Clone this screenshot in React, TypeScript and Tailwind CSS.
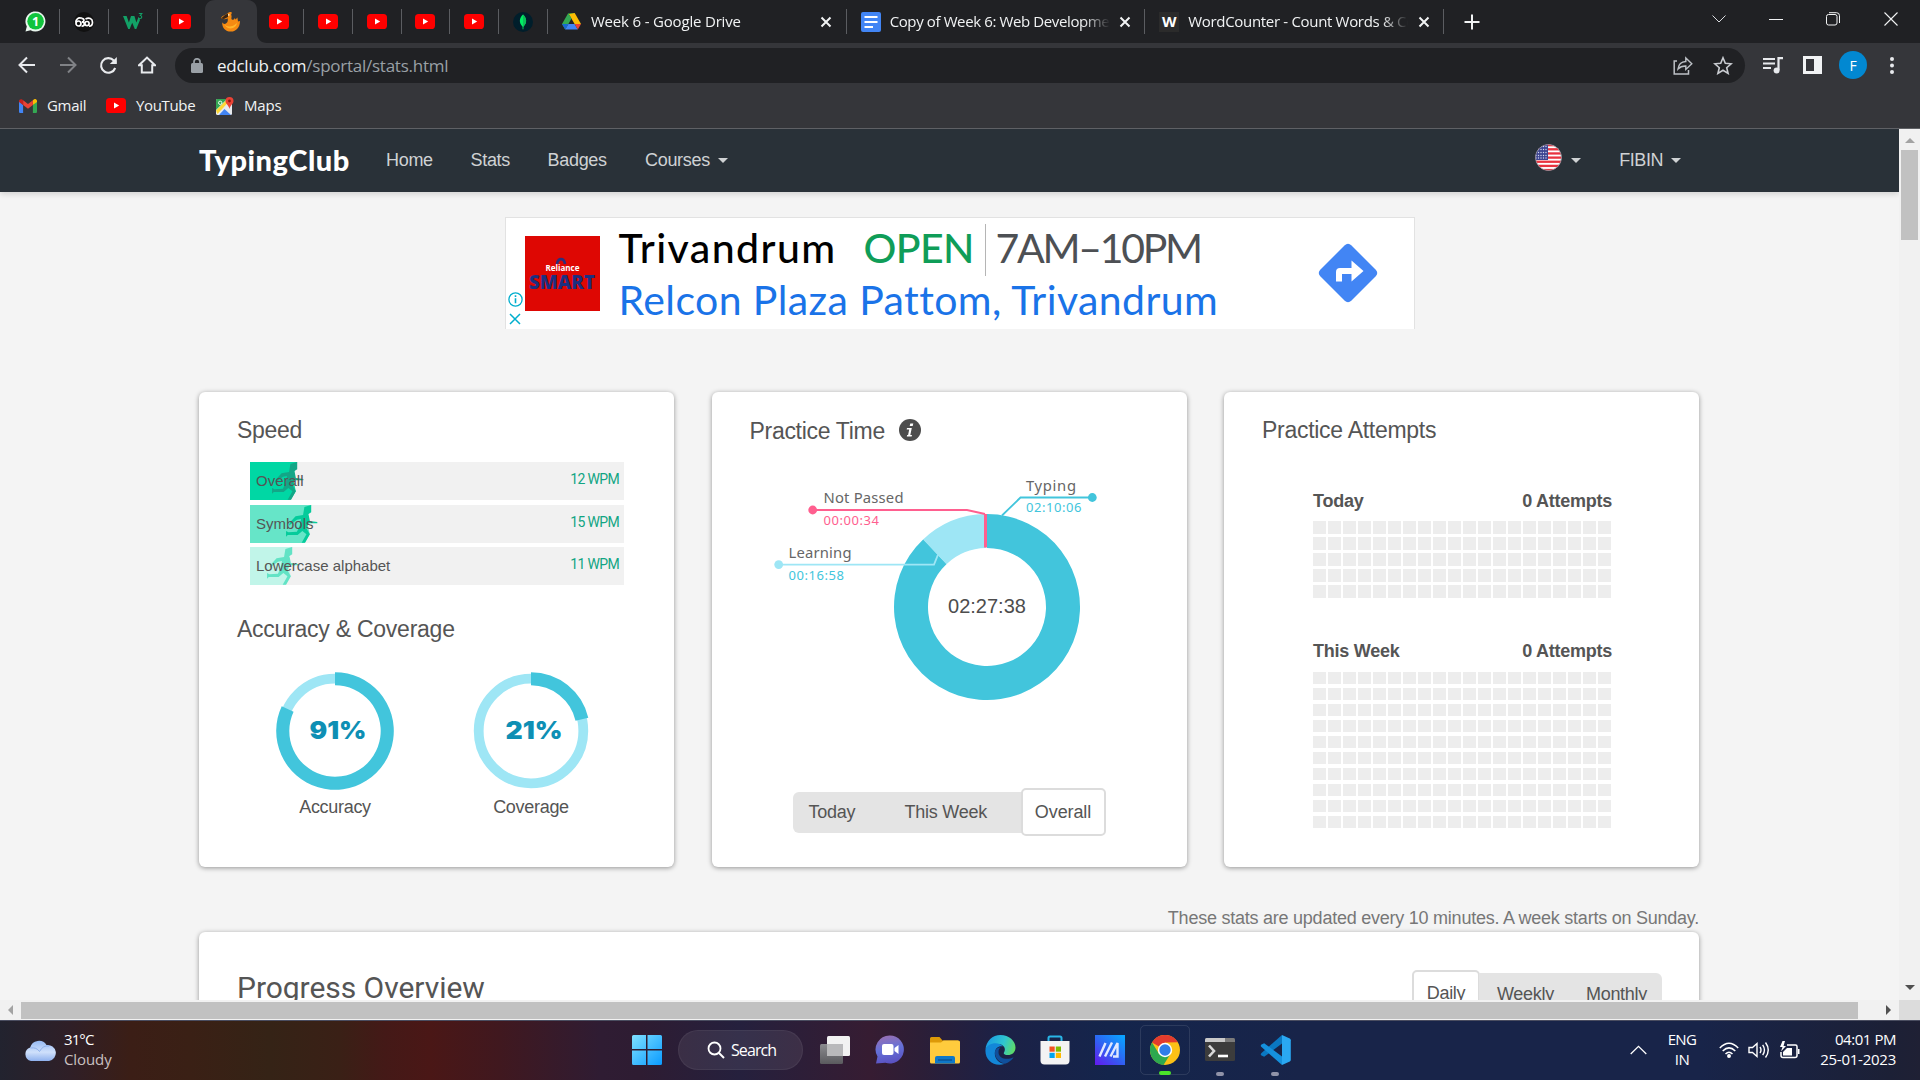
import React from "react";

type Kids = { children?: React.ReactNode };

/* ---------- geometry helpers ---------- */

function pt(cx: number, cy: number, r: number, deg: number) {
  const a = ((deg - 90) * Math.PI) / 180;
  return `${(cx + r * Math.cos(a)).toFixed(2)} ${(cy + r * Math.sin(a)).toFixed(2)}`;
}

function ring(cx: number, cy: number, inner: number, outer: number, from: number, to: number) {
  const large = to - from > 180 ? 1 : 0;
  return `M${pt(cx, cy, outer, from)} A${outer} ${outer} 0 ${large} 1 ${pt(cx, cy, outer, to)} L${pt(cx, cy, inner, to)} A${inner} ${inner} 0 ${large} 0 ${pt(cx, cy, inner, from)} Z`;
}

/* ---------- favicons ---------- */

function YouTube() {
  return (
    <svg width="20" height="15" viewBox="0 0 20 15">
      <rect width="20" height="15" rx="3.6" fill="#f00" />
      <path d="M8 4.4v6.2l5.2-3.1z" fill="#fff" />
    </svg>
  );
}

function WhatsApp() {
  return (
    <svg width="21" height="21" viewBox="0 0 21 21">
      <path d="M.5 20.5l1.300-5A10 10 0 1 1 5.600 19.200z" fill="#e9f7ee" />
      <circle cx="10.600" cy="10.300" r="8.300" fill="#10c43c" />
      <text x="10.600" y="14.800" textAnchor="middle" fontSize="12.500" fontWeight="700" fill="#fff" fontFamily="Open Sans">1</text>
    </svg>
  );
}

function Malayalam() {
  return (
    <svg width="20" height="20" viewBox="0 0 20 20">
      <circle cx="10" cy="10" r="10" fill="#111" />
      <g fill="none" stroke="#fff" strokeWidth="1.700">
        <path d="M7.800 6.300C4 5 1.800 7.500 1.800 10.500" />
        <circle cx="4.500" cy="11.500" r="2.500" />
        <path d="M7.500 6.300c3.200.2 3.200 3.600.3 3.600 3.600.2 3.200 4.400-.2 4.200" />
        <circle cx="13" cy="11.600" r="2.100" />
        <path d="M11.500 7c3.500-2 7-.5 7 3.200 0 2.500-1.500 4-3.500 4" />
      </g>
    </svg>
  );
}

function W3() {
  return (
    <svg width="20" height="20" viewBox="0 0 20 20">
      <path d="M0 4h3.600l2.300 6.500L8 4h3.400l2 6.500L15.500 5l1.500 3-3.700 9h-1.500L9.200 10.800 6.700 17H5.200z" fill="#12a166" />
      <path d="M15.800 1.500h3l-1.500 2c2 .2 2 3-.2 3-.8 0-1.400-.3-1.700-.8" fill="none" stroke="#12a166" strokeWidth="1.100" />
    </svg>
  );
}

function Phoenix() {
  return (
    <svg width="21" height="20" viewBox="0 0 21 20">
      <path d="M8 1c1-1.200 3.500-1.300 4 0-.8.600-1 1.500-.6 2.600.6 1.500-.6 2.500.4 4 1.400.5 2.400 0 3-1.600l.8 1.600 1.800-2 .6 4 2-.6C20 15 16.500 19.600 10.900 19.600c-6 0-9-4.800-8.700-9.300.8 1.400 2.300 2 3.700 1.300C8 10.300 8 8 7.600 6.300 5.300 7.600 3.600 7.300 1 6.300 1.600 4 3.600 3.600 5 3z" fill="#f58a12" />
      <path d="M5 3L1 6.500l3 .4L8 5 8 1.500z" fill="#3a2413" />
      <path d="M4 12c2 3 8 4 13-1-1 6-9 8-13 1z" fill="#ffb52b" />
      <circle cx="8.800" cy="2.900" r=".8" fill="#fff3d0" />
    </svg>
  );
}

function Mongo() {
  return (
    <svg width="20" height="20" viewBox="0 0 20 20">
      <circle cx="10" cy="10" r="10" fill="#001e2b" />
      <path d="M10 2.500c3.600 3.300 4.600 7.800.4 12.300v2.400h-.8v-2.400C5.500 10.300 6.400 5.800 10 2.500z" fill="#00ed64" />
      <path d="M10 2.500c3.600 3.300 4.600 7.800.4 12.300H10z" fill="#0bbf58" />
    </svg>
  );
}

function Drive() {
  return (
    <svg width="19" height="17" viewBox="0 0 19 17">
      <path d="M6.300 0h6.400L9.500 5.600z" fill="#188038" />
      <path d="M12.700 0L19 11h-6.400L6.800 1z" fill="#fbbc04" />
      <path d="M6.300 0L9.500 5.600 6.400 11l-3.200 5.600L0 11z" fill="#34a853" />
      <path d="M6.400 11h6.200l3.200 5.600H3.200z" fill="#4285f4" />
      <path d="M0 11h6.400l-3.200 5.600z" fill="#1967d2" />
      <path d="M12.600 11H19l-3.200 5.600z" fill="#ea4335" />
    </svg>
  );
}

function Docs() {
  return (
    <svg width="20" height="20" viewBox="0 0 20 20">
      <rect width="20" height="20" rx="2" fill="#4285f4" />
      <path d="M3.500 5h13M3.500 10h13M3.500 15h8.500" stroke="#fff" strokeWidth="2" />
    </svg>
  );
}

function Gmail() {
  return (
    <svg width="18" height="14" viewBox="0 0 18 14">
      <path d="M0 2v10.700c0 .7.600 1.300 1.300 1.300h2.800V6z" fill="#4285f4" />
      <path d="M13.900 6v8h2.800c.7 0 1.300-.6 1.300-1.300V2z" fill="#34a853" />
      <path d="M13.900 1.300V6L18 3V2c0-1.700-1.900-2.600-3.200-1.600z" fill="#fbbc04" />
      <path d="M4.100 6V1.300L9 5l4.900-3.700V6L9 9.700z" fill="#ea4335" />
      <path d="M0 2v1l4.100 3V1.300l-.9-.7C1.900-.4 0 .4 0 2z" fill="#c5221f" />
    </svg>
  );
}

function Maps() {
  return (
    <svg width="18" height="18" viewBox="0 0 18 18">
      <rect y="2" width="16" height="16" rx="1.500" fill="#e8eaed" />
      <path d="M1.500 2H11L0 13V3.500C0 2.600.6 2 1.500 2z" fill="#34a853" />
      <path d="M0 13.500L11 2.500l1.500 2.500L1.500 17z" fill="#fdd835" />
      <path d="M3 18l5.500-6L15 18z" fill="#4285f4" />
      <path d="M13.500 0A4 4 0 0 1 17.500 4c0 3-3.200 3.800-4 8-.8-4.200-4-5-4-8a4 4 0 0 1 4-4z" fill="#ea4335" />
      <circle cx="13.500" cy="4" r="1.400" fill="#8c1a11" />
      <circle cx="4.200" cy="5.800" r="1.700" fill="none" stroke="#fff" strokeWidth=".9" />
    </svg>
  );
}

/* ---------- browser chrome ---------- */

function PinnedTab({ children, line = true }: Kids & { line?: boolean }) {
  return (
    <div className="flex h-[43px] w-[48.800px] shrink-0 items-center">
      <div className="flex flex-1 justify-center">{children}</div>
      <div className={line ? "h-[25px] w-px bg-[#5b5d61]" : "h-[25px] w-px"} />
    </div>
  );
}

function ActiveTab({ children }: Kids) {
  return (
    <div className="relative flex h-[43px] w-[48.800px] shrink-0 items-center justify-center">
      <svg className="absolute -left-[11px] top-0" width="72" height="43" viewBox="0 0 72 43">
        <path d="M0 43c6 0 10-4 10-10V10C10 4 14 0 20 0h32c6 0 10 4 10 10v23c0 6 4 10 10 10z" fill="#35363a" />
      </svg>
      <div className="relative">{children}</div>
    </div>
  );
}

function WideTab({ icon, title, tracking }: { icon: React.ReactNode; title: string; tracking: string }) {
  return (
    <div className="flex h-[43px] w-[298.700px] shrink-0 items-center pl-[13px]">
      <div className="flex w-[22px] justify-center">{icon}</div>
      <div className="mb-[2px] ml-2 w-[220px] overflow-hidden [mask-image:linear-gradient(90deg,#000_88%,transparent)]">
        <div className={`whitespace-nowrap text-[15px] leading-5 text-[#f1f3f4] ${tracking}`}>{title}</div>
      </div>
      <svg className="ml-[9.500px]" width="12" height="12" viewBox="0 0 12 12">
        <path d="M1.500 1.500l9 9M10.500 1.500l-9 9" stroke="#f1f3f4" strokeWidth="2" />
      </svg>
      <div className="ml-auto h-[25px] w-px bg-[#5b5d61]" />
    </div>
  );
}

function TabStrip() {
  return (
    <div className="flex h-[43px] items-center bg-[#202124] pl-[11.200px]">
      <PinnedTab><WhatsApp /></PinnedTab>
      <PinnedTab><Malayalam /></PinnedTab>
      <PinnedTab><W3 /></PinnedTab>
      <PinnedTab line={false}><YouTube /></PinnedTab>
      <ActiveTab><Phoenix /></ActiveTab>
      <PinnedTab><YouTube /></PinnedTab>
      <PinnedTab><YouTube /></PinnedTab>
      <PinnedTab><YouTube /></PinnedTab>
      <PinnedTab><YouTube /></PinnedTab>
      <PinnedTab><YouTube /></PinnedTab>
      <PinnedTab><Mongo /></PinnedTab>
      <WideTab icon={<Drive />} title="Week 6 - Google Drive" tracking="tracking-[-0.180px]" />
      <WideTab icon={<Docs />} title="Copy of Week 6: Web Development" tracking="tracking-[-0.380px]" />
      <WideTab
        icon={<div className="flex size-5 items-center justify-center bg-[#2b2b2b] text-[15px] font-bold text-white">W</div>}
        title="WordCounter - Count Words & Correct Writing"
        tracking="tracking-[-0.320px]"
      />
      <svg className="ml-[20px]" width="16" height="16" viewBox="0 0 16 16">
        <path d="M8 .5v15M.5 8h15" stroke="#f1f3f4" strokeWidth="2" />
      </svg>
      <div className="mb-[6px] ml-auto flex items-center">
        <svg className="mr-[43px]" width="14" height="8" viewBox="0 0 14 8"><path d="M.5.5L7 7 13.500.5" fill="none" stroke="#dadce0" /></svg>
        <svg className="mr-[43px]" width="14" height="8" viewBox="0 0 14 8"><path d="M0 4.500h14" stroke="#f1f3f4" /></svg>
        <svg className="mr-[44px]" width="14" height="14" viewBox="0 0 14 14">
          <rect x=".5" y="2.500" width="10.500" height="10.500" rx="2" fill="none" stroke="#f1f3f4" />
          <path d="M3 .7h7.500a3 3 0 0 1 3 3V11" fill="none" stroke="#f1f3f4" />
        </svg>
        <svg className="mr-[22px]" width="14" height="14" viewBox="0 0 14 14"><path d="M.5.5l13 13M13.500.5l-13 13" stroke="#f1f3f4" strokeWidth="1.100" /></svg>
      </div>
    </div>
  );
}

function Toolbar() {
  return (
    <div className="flex h-[45px] items-center pb-[1px] pl-[18px]">
      <svg width="18" height="18" viewBox="0 0 18 18"><path d="M17 9H2M9 1.500L1.500 9 9 16.500" fill="none" stroke="#e8eaed" strokeWidth="2" /></svg>
      <svg className="ml-[23px]" width="18" height="18" viewBox="0 0 18 18"><path d="M1 9h15M9 1.500L16.500 9 9 16.500" fill="none" stroke="#808286" strokeWidth="2" /></svg>
      <svg className="ml-[22px]" width="19" height="19" viewBox="0 0 19 19">
        <path d="M16.200 12A7.300 7.300 0 1 1 14.800 4.500L17 6.800" fill="none" stroke="#e8eaed" strokeWidth="2.100" />
        <path d="M17.800 1v7h-7z" fill="#e8eaed" />
      </svg>
      <svg className="ml-[20px]" width="18" height="18" viewBox="0 0 18 18"><path d="M1 9.200h2.800V16.500h10.400V9.200H17L9 1.600z" fill="none" stroke="#e8eaed" strokeWidth="2" /></svg>
      <div className="ml-[19px] mt-[1px] flex h-[35px] w-[1570px] items-center rounded-full bg-[#202124] pl-4">
        <svg width="12" height="15" viewBox="0 0 12 15">
          <rect y="5" width="12" height="10" rx="1.500" fill="#9aa0a6" />
          <path d="M3 6V3.800a3 3 0 0 1 6 0V6" fill="none" stroke="#9aa0a6" strokeWidth="1.700" />
        </svg>
        <div className="ml-[14px] text-[17px] leading-6 tracking-[-0.250px] text-[#9aa0a6]">
          <span className="text-[#f1f3f4]">edclub.com</span>/sportal/stats.html
        </div>
        <svg className="ml-auto" width="20" height="19" viewBox="0 0 20 19">
          <path d="M4 5H1.200v13h14.300v-4" fill="none" stroke="#bdc1c6" strokeWidth="1.500" />
          <path d="M5 13c.6-4.800 3.300-7.300 7.800-7.500V2l6 5.800-6 5.600V10C9.400 9.900 7 10.900 5 13z" fill="none" stroke="#bdc1c6" strokeWidth="1.400" />
        </svg>
        <svg className="ml-[20px] mr-[12px]" width="20" height="19" viewBox="0 0 20 19">
          <path d="M10 1.800l2.300 5.500 5.900.5-4.500 3.900 1.400 5.700L10 14.300l-5.100 3.100 1.400-5.700-4.500-3.900 5.900-.5z" fill="none" stroke="#c9ccd1" strokeWidth="1.600" />
        </svg>
      </div>
      <svg className="ml-[18px]" width="20" height="17" viewBox="0 0 20 17">
        <path d="M0 2h12M0 6.500h12M0 11h8" stroke="#e8eaed" strokeWidth="2" />
        <path d="M15.500 13V1.200H20" fill="none" stroke="#e8eaed" strokeWidth="2.200" />
        <circle cx="13.600" cy="13.400" r="3" fill="#e8eaed" />
      </svg>
      <svg className="ml-[20px]" width="19" height="18" viewBox="0 0 19 18">
        <path d="M0 0h19v18H0zM3 3v12h8V3z" fill="#f1f3f4" fillRule="evenodd" />
      </svg>
      <div className="ml-[17px] flex size-7 items-center justify-center rounded-full bg-[#0288d1] text-[14px] text-white">F</div>
      <svg className="ml-[23px]" width="4" height="17" viewBox="0 0 4 17">
        <circle cx="2" cy="2" r="2" fill="#e8eaed" /><circle cx="2" cy="8.500" r="2" fill="#e8eaed" /><circle cx="2" cy="15" r="2" fill="#e8eaed" />
      </svg>
    </div>
  );
}

function Bookmarks() {
  return (
    <div className="flex h-[41px] items-center border-b border-[#5f6165] pb-[5px] pl-[19px] text-[15px] leading-5 text-[#f1f3f4]">
      <Gmail />
      <span className="mb-[2px] ml-[10px] w-[59px] tracking-[-0.300px]">Gmail</span>
      <YouTube />
      <span className="mb-[2px] ml-[10px] w-[80px] tracking-[-0.350px]">YouTube</span>
      <Maps />
      <span className="mb-[2px] ml-[10px] tracking-[-0.200px]">Maps</span>
    </div>
  );
}

/* ---------- page ---------- */

const Caret = () => <span className="inline-block border-x-[5px] border-t-[5px] border-x-transparent border-t-[#cfd2d4]" />;

function Flag() {
  return (
    <svg width="27" height="27" viewBox="0 0 27 27">
      <defs><clipPath id="flag"><circle cx="13.500" cy="13.500" r="13" /></clipPath></defs>
      <g clipPath="url(#flag)">
        <rect width="27" height="27" fill="#fff" />
        {[0, 1, 2, 3, 4, 5, 6].map((i) => <rect key={i} y={i * 4.150} width="27" height="2.300" fill="#e8333f" />)}
        <rect width="13" height="16" fill="#3d4591" />
        {[1, 3.500, 6, 8.500, 11].map((x) => [2.500, 5.500, 8.500, 11.500, 14].map((y) => <circle key={x * 100 + y} cx={x} cy={y} r=".7" fill="#d5d8f0" />))}
      </g>
      <circle cx="13.500" cy="13.500" r="13" fill="none" stroke="#8d8f9b" strokeWidth=".7" />
    </svg>
  );
}

function Navbar() {
  return (
    <div className="relative flex h-[63px] shrink-0 items-center bg-[#293138] pb-[2px] pl-[199px] font-['Liberation_Sans',sans-serif] text-[18px] leading-6 tracking-[-0.300px] text-[#cfd2d4] shadow-[0_2px_6px_rgba(0,0,0,0.150)]">
      <span className="w-[187px] font-['Lato',sans-serif] text-[29px] font-black leading-8 tracking-[0.500px] text-white">TypingClub</span>
      <span className="w-[84.500px]">Home</span>
      <span className="w-[77px]">Stats</span>
      <span className="w-[97.500px]">Badges</span>
      <span>Courses</span>
      <span className="ml-2 mt-[2px] flex"><Caret /></span>
      <div className="ml-auto mr-[218px] flex items-center">
        <div className="mb-[5px]"><Flag /></div>
        <span className="ml-[9px] mt-[2px] flex"><Caret /></span>
        <span className="ml-[38px] tracking-[-0.450px]">FIBIN</span>
        <span className="ml-2 mt-[2px] flex"><Caret /></span>
      </div>
    </div>
  );
}

function Ad() {
  return (
    <div className="mx-auto mt-[25px] flex h-[112px] w-[910px] translate-x-[10px] items-start border border-b-0 border-[#e2e2e2] bg-white font-['Lato',sans-serif]">
      <div className="flex h-full w-[19px] flex-col items-center justify-end pb-[4px]">
        <svg width="15" height="15" viewBox="0 0 15 15"><circle cx="7.500" cy="7.500" r="6.600" fill="none" stroke="#00aecd" strokeWidth="1.300" /><path d="M7.500 6.300v5M7.500 3.300v1.700" stroke="#00aecd" strokeWidth="1.600" /></svg>
        <svg className="mt-[6px]" width="12" height="12" viewBox="0 0 12 12"><path d="M1 1l10 10M11 1L1 11" stroke="#00aecd" strokeWidth="1.500" /></svg>
      </div>
      <svg className="mt-[18px]" width="75" height="75" viewBox="0 0 75 75">
        <rect width="75" height="75" fill="#de0703" />
        <path d="M32 28c1-6.500 7-6.500 8 0" fill="none" stroke="#2d2f7c" strokeWidth="2.600" />
        <text x="37.500" y="35" textAnchor="middle" fontSize="8.500" fontWeight="700" fill="#fff" fontFamily="Open Sans" textLength="34" lengthAdjust="spacingAndGlyphs">Reliance</text>
        <text x="37" y="53" textAnchor="middle" fontSize="19.500" fontWeight="800" fill="#1c2f80" fontFamily="Open Sans" textLength="66" lengthAdjust="spacingAndGlyphs">SMART</text>
      </svg>
      <div className="ml-[19px] flex w-[700px] flex-col whitespace-nowrap text-[41px]">
        <div className="flex h-[58px] items-center leading-[58px]">
          <span className="mt-[2px] w-[245px] font-medium tracking-[1.400px] text-black">Trivandrum</span>
          <span className="mt-[2px] w-[121px] font-medium tracking-[-0.600px] text-[#0f9d58]">OPEN</span>
          <span className="mt-[5px] h-[52px] w-px bg-[#b5b5b5]" />
          <span className="ml-[10px] mt-[2px] tracking-[-2.300px] text-[#4d5054]">7AM–10PM</span>
        </div>
        <div className="leading-[48px] tracking-[0.400px] text-[#1a73e8]">Relcon Plaza Pattom, Trivandrum</div>
      </div>
      <svg className="-ml-px mt-[25px]" width="60" height="60" viewBox="0 0 60 60">
        <path d="M26.500 2.500q3.500-3.500 7 0l24 24q3.500 3.500 0 7l-24 24q-3.500 3.500-7 0l-24-24q-3.500-3.500 0-7z" fill="#4285f4" />
        <path d="M18 38.500V29q0-4 4-4h11.500v-7.500l12 10.500-12 10.500V31H24v7.500z" fill="#fff" />
      </svg>
    </div>
  );
}

function Card({ children }: Kids) {
  return <div className="relative h-[475px] w-[475px] rounded-md bg-white shadow-[0_1px_5px_rgba(0,0,0,0.400)]">{children}</div>;
}

const RUNNER = "M60 6l20-6v22l-9 6 2 4 3 16 22 3v4H72l-6 15 10 18-14 25H52l14-25-12-10-14 12H11l-5 5V78l7 4 25-2 8-18 4-20-12 2-18 14-6 4 4-10 16-18 22-4z";

function SpeedRow({ label, wpm, lead, bar, runner }: { label: string; wpm: string; lead: string; bar: string; runner: string }) {
  return (
    <div className="relative flex h-[38px] w-[374px] bg-[#f1f1f1]">
      <div className={lead} />
      <svg width="34" height="38" viewBox="0 0 100 114" preserveAspectRatio="none">
        <path d="M-2 0h82l-8 30-2 30 6 28-16 26H-2z" fill={bar} />
        <path d={RUNNER} fill={runner} />
      </svg>
      <div className="absolute inset-0 flex items-center justify-between pl-[6px] pr-[5px] leading-5">
        <span className="text-[15px] text-[#555]">{label}</span>
        <span className="mb-[4px] font-['Roboto',sans-serif] text-[14px] tracking-[-0.650px] text-[#12a583]">{wpm}</span>
      </div>
    </div>
  );
}

function Gauge({ pct, sweep, label }: { pct: string; sweep: number; label: string }) {
  return (
    <div className="flex w-[196px] flex-col items-center">
      <svg width="120" height="120" viewBox="0 0 120 120">
        <circle cx="60" cy="60" r="52.300" fill="none" stroke="#9ee6f5" strokeWidth="9.800" />
        <path d={ring(60, 60, 45.700, 58.800, 0, sweep)} fill="#42c5dc" />
        <text x="63" y="68" textAnchor="middle" fontFamily="Inter" fontWeight="900" fontSize="24" fill="#0e8fb4" textLength="57" lengthAdjust="spacingAndGlyphs">{pct}</text>
      </svg>
      <div className="mt-[4px] text-[18px] leading-6 tracking-[-0.300px] text-[#555]">{label}</div>
    </div>
  );
}

function SpeedCard() {
  return (
    <Card>
      <div className="pl-[38px] pt-[24px]">
        <div className="text-[23px] leading-7 tracking-[-0.300px]">Speed</div>
        <div className="ml-[13px] mt-[18px] flex flex-col gap-[4.500px]">
          <SpeedRow label="Overall" wpm="12 WPM" lead="w-[20px] bg-[#00d7a4]" bar="#00d7a4" runner="#13a687" />
          <SpeedRow label="Symbols" wpm="15 WPM" lead="w-[34px] bg-[#66e5c8]" bar="#66e5c8" runner="#05cb9b" />
          <SpeedRow label="Lowercase alphabet" wpm="11 WPM" lead="w-[15px] bg-[#c1f5e9]" bar="#c1f5e9" runner="#62e3c5" />
        </div>
        <div className="mt-[30px] text-[23px] leading-7 tracking-[-0.250px]">Accuracy &amp; Coverage</div>
        <div className="mt-[28px] flex">
          <Gauge pct="91%" sweep={295} label="Accuracy" />
          <Gauge pct="21%" sweep={77} label="Coverage" />
        </div>
      </div>
    </Card>
  );
}

function PracticeTimeCard() {
  return (
    <Card>
      <div className="flex items-center pl-[38px] pt-[25px]">
        <span className="text-[23px] leading-7 tracking-[-0.300px]">Practice Time</span>
        <svg className="mb-[2px] ml-[14px]" width="22" height="22" viewBox="0 0 22 22">
          <circle cx="11" cy="11" r="11" fill="#4d4d4d" />
          <path d="M8 9h4.800l-1.500 7h1.700l-.4 1.500H7.800L8.200 16h.9l1.100-5.400H7.700zM11.300 4.500h3l-.6 2.600h-3z" fill="#fff" />
        </svg>
      </div>
      <svg className="mt-[27px]" width="475" height="240" viewBox="712 472 475 240" fontFamily="Noto Sans">
        <path d={ring(987, 607, 59, 93, 0, 316.800)} fill="#42c5dc" />
        <path d={ring(987, 607, 59, 93, 316.600, 359)} fill="#9ee6f5" />
        <path d="M984 514h3v33.500h-3z" fill="#ff5f8f" />
        <g fill="none" strokeWidth="1.800">
          <path d="M812 510H967l18 4" stroke="#ff5f8f" />
          <path d="M1092 497.500H1020.500L1002 515.500" stroke="#42c5dc" />
          <path d="M778 564.600H934l4-10" stroke="#9ee6f5" />
        </g>
        <circle cx="812.700" cy="510" r="4.400" fill="#ff5f8f" />
        <circle cx="1092.300" cy="497.500" r="4.400" fill="#42c5dc" />
        <circle cx="778.700" cy="564.600" r="4.400" fill="#9ee6f5" />
        <g fontSize="14.800" fill="#666">
          <text x="823.500" y="503" textLength="80">Not Passed</text>
          <text x="1026" y="491" textLength="50">Typing</text>
          <text x="788.500" y="558" textLength="63">Learning</text>
        </g>
        <g fontSize="13">
          <text x="823.500" y="525" textLength="55.500" fill="#ff5f8f">00:00:34</text>
          <text x="1026" y="512" textLength="55.500" fill="#42c5dc">02:10:06</text>
          <text x="788.500" y="580" textLength="55.500" fill="#42c5dc">00:16:58</text>
        </g>
        <text x="987" y="613" textAnchor="middle" fontFamily="Liberation Sans" fontSize="20" fill="#4d4d4d">02:27:38</text>
      </svg>
      <div className="ml-[81px] mt-[76px] flex h-[48px] items-center text-[18px] leading-6 tracking-[-0.250px]">
        <div className="flex h-[41px] w-[229px] items-center rounded-l-md bg-[#e4e4e4] pl-4">
          <span className="w-[96px]">Today</span>
          <span>This Week</span>
        </div>
        <div className="-ml-px flex h-[48px] w-[85px] items-center justify-center rounded-[5px] border-2 border-[#dcdcdc] bg-white tracking-[-0.100px]">Overall</div>
      </div>
    </Card>
  );
}

function Squares({ rows, cell }: { rows: number; cell: string }) {
  return (
    <div className="grid w-[298px] grid-cols-[repeat(20,13px)] gap-x-[2px]">
      {Array.from({ length: rows * 20 }, (_, i) => <div key={i} className={cell} />)}
    </div>
  );
}

function AttemptsCard() {
  return (
    <Card>
      <div className="pl-[38px] pt-[24px] text-[23px] leading-7 tracking-[-0.280px]">Practice Attempts</div>
      <div className="ml-[89px] mt-[45px] w-[299px] text-[18px] font-bold leading-6 tracking-[-0.250px] text-[#555]">
        <div className="mb-[8px] flex justify-between"><span>Today</span><span>0 Attempts</span></div>
        <Squares rows={5} cell="mb-[3px] h-[13px] w-[13px] bg-[#ededed]" />
        <div className="mb-[9px] mt-[38px] flex justify-between"><span>This Week</span><span>0 Attempts</span></div>
        <Squares rows={10} cell="mb-[4px] h-[12px] w-[13px] bg-[#ededed]" />
      </div>
    </Card>
  );
}

function Page() {
  return (
    <div className="flex h-[871px] w-[1899px] flex-col overflow-hidden bg-[#f4f4f4] font-['Liberation_Sans',sans-serif] text-[#555]">
      <Navbar />
      <div className="flex flex-col">
        <Ad />
        <div className="mt-[63px] flex gap-[37.500px] pl-[199px]">
          <SpeedCard />
          <PracticeTimeCard />
          <AttemptsCard />
        </div>
        <div className="mr-[200px] mt-[39px] text-right text-[18px] leading-6 tracking-[-0.240px] text-[#777]">
          These stats are updated every 10 minutes. A week starts on Sunday.
        </div>
        <div className="ml-[199px] mt-[2px] flex h-[200px] w-[1500px] items-start justify-between rounded-md bg-white pl-[38px] pr-[37px] shadow-[0_1px_5px_rgba(0,0,0,0.400)]">
          <div className="mt-[36px] font-['Roboto',sans-serif] text-[30px] leading-10 tracking-[-0.040px]">Progress Overview</div>
          <div className="mt-[38px] flex text-[18px] leading-6 tracking-[-0.300px]">
            <div className="h-[48px] w-[68px] rounded-[5px] border-2 border-[#dcdcdc] bg-white pt-[9px] text-center">Daily</div>
            <div className="-ml-px mt-[3px] flex h-[41px] w-[183px] rounded-r-md bg-[#e4e4e4] pl-[18px] pt-[9px]">
              <span className="w-[89px]">Weekly</span>
              <span>Monthly</span>
            </div>
          </div>
        </div>
      </div>
    </div>
  );
}

function VScroll() {
  return (
    <div className="flex h-[871px] w-[21px] flex-col items-center bg-[#f1f1f1]">
      <div className="mt-[9px] border-x-[5px] border-b-[5px] border-x-transparent border-b-[#a3a3a3]" />
      <div className="mt-[7px] h-[90px] w-[17px] bg-[#c1c1c1]" />
      <div className="mb-[10px] mt-auto border-x-[5px] border-t-[5px] border-x-transparent border-t-[#505050]" />
    </div>
  );
}

function HScroll() {
  return (
    <div className="flex h-[20px] w-full">
      <div className="flex w-[1899px] items-center bg-[#f1f1f1]">
        <div className="ml-[8px] border-y-[5px] border-r-[5px] border-y-transparent border-r-[#a3a3a3]" />
        <div className="ml-[8px] h-[17px] w-[1837px] bg-[#c1c1c1]" />
        <div className="ml-[28px] border-y-[5px] border-l-[5px] border-y-transparent border-l-[#505050]" />
      </div>
      <div className="w-[21px] bg-[#dcdcdc]" />
    </div>
  );
}

/* ---------- taskbar ---------- */

function Slot({ children, active, dot }: Kids & { active?: boolean; dot?: string }) {
  return (
    <div className={active ? "relative flex h-[50px] w-[50px] items-center justify-center rounded-[5px] border border-white/10" : "relative flex h-[50px] w-[50px] items-center justify-center"}>
      {children}
      {dot && <span className={`absolute -bottom-px rounded-full ${dot}`} />}
    </div>
  );
}

function TaskIcons() {
  return (
    <div className="flex items-center gap-[5px]">
      <Slot>
        <svg width="30" height="30" viewBox="0 0 30 30">
          <defs><linearGradient id="win" x1="0" y1="0" x2="30" y2="30" gradientUnits="userSpaceOnUse"><stop stopColor="#7fe0ff" /><stop offset="1" stopColor="#0a9bff" /></linearGradient></defs>
          <path d="M1.500 0H14v14H0V1.500Q0 0 1.500 0zM15.500 0h13Q30 0 30 1.500V14H15.500zM0 15.500h14V30H1.500Q0 30 0 28.500zM15.500 15.500H30v13q0 1.500-1.500 1.500h-13z" fill="url(#win)" />
        </svg>
      </Slot>
      <div className="ml-px mr-[2px] flex h-[40px] w-[125px] items-center rounded-full border border-white/5 bg-white/8 pl-[28px] text-[16px] text-white">
        <svg width="18" height="18" viewBox="0 0 18 18"><circle cx="7.500" cy="7.500" r="6" fill="none" stroke="#fff" strokeWidth="1.800" /><path d="M12 12l5 5" stroke="#fff" strokeWidth="2" /></svg>
        <span className="ml-[6px] tracking-[-0.900px]">Search</span>
      </div>
      <Slot>
        <svg width="30" height="28" viewBox="0 0 30 28">
          <defs>
            <linearGradient id="tvb" x1="0" y1="8" x2="0" y2="28" gradientUnits="userSpaceOnUse"><stop stopColor="#8b8b8f" /><stop offset="1" stopColor="#5a5a5e" /></linearGradient>
          </defs>
          <rect y="8" width="23" height="20" rx="1.500" fill="url(#tvb)" />
          <rect x="7" width="23" height="20" rx="1.500" fill="#f2f2f2" />
          <rect x="7" y="8" width="16" height="12" fill="#b9b9bb" />
        </svg>
      </Slot>
      <Slot>
        <svg width="30" height="29" viewBox="0 0 30 29">
          <defs><linearGradient id="chat" x1="8" y1="0" x2="14" y2="29" gradientUnits="userSpaceOnUse"><stop stopColor="#9a6fb0" /><stop offset=".5" stopColor="#6470d8" /><stop offset="1" stopColor="#5a50c0" /></linearGradient></defs>
          <path d="M15 .5a14 14 0 1 1-4.500 27.300L1 28.500l1.500-7A14 14 0 0 1 15 .5z" fill="url(#chat)" />
          <rect x="7" y="9" width="11.500" height="11" rx="2" fill="#fff" />
          <path d="M19.500 13l4-3v9l-4-3z" fill="#fff" />
        </svg>
      </Slot>
      <Slot>
        <svg width="30" height="28" viewBox="0 0 30 28">
          <path d="M0 2.500Q0 1 1.500 1h8l3 3.500H28v7H0z" fill="#dd9a08" />
          <path d="M0 6.500h11l2.500-2h15q1.500 0 1.500 1.500v20q0 1.500-1.500 1.500h-27Q0 27.500 0 26z" fill="#ffcb3d" />
          <path d="M5 27.500V22q0-2 2-2h16q2 0 2 2v5.500z" fill="#0f78c8" />
          <path d="M8 24h14" stroke="#0a4f8e" strokeWidth="1.300" />
        </svg>
      </Slot>
      <Slot>
        <svg width="31" height="30" viewBox="0 0 31 30">
          <defs>
            <linearGradient id="edge" x1="2" y1="6" x2="30" y2="16" gradientUnits="userSpaceOnUse"><stop stopColor="#1b9de2" /><stop offset=".55" stopColor="#2fc5d0" /><stop offset="1" stopColor="#63dd5e" /></linearGradient>
          </defs>
          <path d="M.5 14.500C1 6 7.500 0 15.500 0 24 0 30.500 6 30.500 12.500c0 5-3.700 7.500-7.500 7.500-3.300 0-4.800-1.300-4-2.600 2.500-3.900-.5-8.400-6-8.400-6 0-11 2-12.500 5.500z" fill="url(#edge)" />
          <path d="M.5 14.500C2 10.500 6 8.300 10.500 8.300c3 0 5.500.7 7.300 3.200-3-1.300-8 1-8 7 0 6 5 10.500 10.200 10.300C9 32.500-.5 25 .5 14.500z" fill="#1387d8" />
          <path d="M10 17c-.5 6 4.500 10.500 10 11.700 3.500-1 7.200-4 8.500-6.500-6 3.300-15 1.800-15-5.200 0-2 .8-3.600 2-4.500-3 0-5.300 2-5.500 4.500z" fill="#10509c" />
        </svg>
      </Slot>
      <Slot>
        <svg width="30" height="30" viewBox="0 0 30 30">
          <path d="M8.500 6.500V3Q8.500 1.500 10 1.500h10q1.500 0 1.500 1.500v3.500" fill="none" stroke="#29b6e8" strokeWidth="2" />
          <path d="M.5 6h29v19.500q0 4-4 4h-21q-4 0-4-4z" fill="#f3f3f3" />
          <path d="M9.500 11.500h5.200v5.200H9.500z" fill="#f25022" /><path d="M15.800 11.500H21v5.200h-5.200z" fill="#7fba00" />
          <path d="M9.500 17.800h5.200V23H9.500z" fill="#00a4ef" /><path d="M15.800 17.800H21V23h-5.200z" fill="#ffb900" />
        </svg>
      </Slot>
      <Slot>
        <svg width="30" height="30" viewBox="0 0 30 30">
          <defs><linearGradient id="asus" x1="0" y1="30" x2="26" y2="0" gradientUnits="userSpaceOnUse"><stop stopColor="#6417ee" /><stop offset=".5" stopColor="#3061f2" /><stop offset="1" stopColor="#0aa2ff" /></linearGradient></defs>
          <rect width="30" height="30" fill="url(#asus)" />
          <path d="M4.500 21.500L10.500 8M10 21.500L17 7.500" stroke="#dfe8ff" strokeWidth="2.400" />
          <path d="M15.500 21.500L22.500 8v13.500h-4.500" fill="none" stroke="#dfe8ff" strokeWidth="2.400" />
        </svg>
      </Slot>
      <Slot active dot="h-1 w-3 bg-[#4be32a]">
        <svg width="30" height="30" viewBox="0 0 30 30">
          <circle cx="15" cy="15" r="15" fill="#fbc116" />
          <path d="M2 7.500A15 15 0 0 1 28 7.500L15 8v7z" fill="#e33b2e" />
          <path d="M2 7.500L8.800 18.500 15 21.700 21 18l-7.500 12A15 15 0 0 1 2 7.500z" fill="#2da94f" />
          <path d="M28 7.500H15v6h6z" fill="#fbc116" />
          <circle cx="15" cy="15" r="7.200" fill="#fff" />
          <circle cx="15" cy="15" r="5.700" fill="#2f7de9" />
        </svg>
      </Slot>
      <Slot dot="h-1 w-2 bg-[#9093a8]">
        <svg width="30" height="23" viewBox="0 0 30 23">
          <rect width="30" height="23" rx="1.500" fill="#3c3c3c" />
          <path d="M1.500 0H20v4H0V1.500Q0 0 1.500 0z" fill="#c9c9c9" /><path d="M20 0h8.500Q30 0 30 1.500V4H20z" fill="#7b7b7b" />
          <path d="M4 7.500l5 5.500-5 5.500" fill="none" stroke="#d9d9d9" strokeWidth="2.600" /><path d="M13 18h10" stroke="#fff" strokeWidth="2.600" />
        </svg>
      </Slot>
      <Slot dot="h-1 w-2 bg-[#9093a8]">
        <svg width="31" height="30" viewBox="0 0 31 30">
          <path d="M22 0v8.500L4.200 21.800 1.500 20.500q-1.500-1 0-2.500z" fill="#0a78c2" />
          <path d="M22 30v-8.500L4.200 8.200 1.500 9.500q-1.500 1 0 2.500z" fill="#1591dd" />
          <path d="M22 0l7.800 3.500q1 .5 1 1.800v19.400q0 1.300-1 1.800L22 30z" fill="#2aa8f2" />
        </svg>
      </Slot>
    </div>
  );
}

function Taskbar() {
  return (
    <div className="flex h-[60px] items-center border-t border-[#4a4d60] bg-[linear-gradient(90deg,#22232f_0px,#2f1f27_70px,#3b1e16_130px,#3a2015_190px,#352316_270px,#3a2016_340px,#441917_385px,#4a1716_430px,#40181f_500px,#2f1c33_600px,#2e1c32_640px,#25203d_740px,#361c32_870px,#2c1e37_920px,#1c2146_1000px,#14254c_1110px,#182449_1300px,#182449_1700px,#1c2036_1890px,#1f2034_1920px)] pb-[2px] font-['Open_Sans','Noto_Sans',sans-serif] text-white">
      <div className="flex w-[622px] items-center pl-[24px]">
        <svg width="32" height="22" viewBox="0 0 32 22">
          <defs><linearGradient id="cloud" x1="0" y1="0" x2="0" y2="22" gradientUnits="userSpaceOnUse"><stop stopColor="#8db4f2" /><stop offset=".6" stopColor="#cfe0fb" /><stop offset="1" stopColor="#8fb1ee" /></linearGradient></defs>
          <path d="M7 22a7 7 0 0 1-.8-13.500A9 9 0 0 1 22.500 6 8 8 0 0 1 25 22z" fill="url(#cloud)" />
          <path d="M6.500 9q6-1 9 3.500Q19 6 25 7" fill="none" stroke="#8fb0ea" strokeWidth="1" />
        </svg>
        <div className="mb-[2px] ml-[8px] text-[15px] leading-5">
          <div className="tracking-[-0.900px]">31°C</div>
          <div className="tracking-[-0.100px] text-[#c9c0c0]">Cloudy</div>
        </div>
      </div>
      <TaskIcons />
      <div className="ml-auto mr-[24px] flex items-center text-[15px] leading-5">
        <svg width="17" height="10" viewBox="0 0 17 10"><path d="M.7 9L8.500 1.300 16.300 9" fill="none" stroke="#fff" strokeWidth="1.300" /></svg>
        <div className="mb-px ml-[18px] w-[34px] text-center tracking-[-0.600px]"><div>ENG</div><div>IN</div></div>
        <svg className="ml-[20px]" width="20" height="16" viewBox="0 0 20 16" fill="none" stroke="#fff" strokeWidth="1.500">
          <path d="M.8 6Q10-3.500 19.200 6M3.700 9q6.300-6.300 12.600 0M6.500 12q3.500-3.500 7 0" /><circle cx="10" cy="14" r="1.200" fill="#fff" />
        </svg>
        <svg className="ml-[9px]" width="22" height="18" viewBox="0 0 22 18" fill="none" stroke="#fff" strokeWidth="1.400">
          <path d="M1 6.500h3.500L9 2.500v13l-4.500-4H1zM12 6q2 3 0 6M14.700 3.800q3.500 5.200 0 10.400M17.500 1.500q5.500 7.500 0 15" />
        </svg>
        <svg className="ml-[9px]" width="21" height="18" viewBox="0 0 21 18">
          <path d="M8 4h8.500Q18 4 18 5.500v9q0 2-2 2H4q-2 0-2-2V11" fill="none" stroke="#fff" strokeWidth="1.500" />
          <path d="M4 14.500V11l4-4h5v7.500zM19 8h1.500v5H19z" fill="#fff" />
          <path d="M3.500 0L1 6h2.500L2 10.500 7 5H4.500L6 0z" fill="#fff" />
        </svg>
        <div className="mb-[2px] ml-[20px] w-[76px] whitespace-nowrap text-right">
          <div className="tracking-[-0.450px]">04:01 PM</div>
          <div className="tracking-[-0.250px]">25-01-2023</div>
        </div>
      </div>
    </div>
  );
}

export default function App() {
  return (
    <div className="flex h-[1080px] w-[1920px] flex-col overflow-hidden bg-[#35363a] font-['Open_Sans','Noto_Sans',sans-serif]">
      <TabStrip />
      <Toolbar />
      <Bookmarks />
      <div className="flex h-[871px] shrink-0">
        <Page />
        <VScroll />
      </div>
      <HScroll />
      <Taskbar />
    </div>
  );
}
